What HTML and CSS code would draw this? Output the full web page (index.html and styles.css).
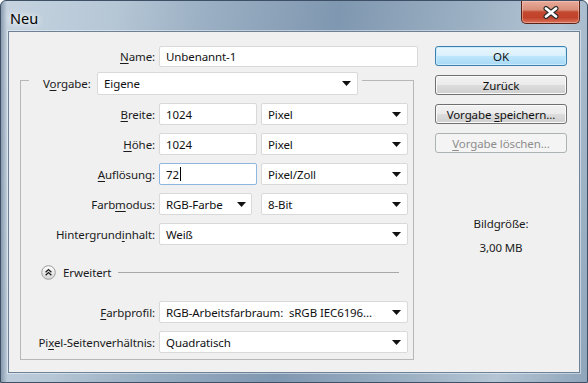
FILE: index.html
```html
<!DOCTYPE html>
<html lang="de">
<head>
    <meta charset="UTF-8">
    <meta name="viewport" content="width=device-width, initial-scale=1.0">
    <title>Neu</title>
    <link rel="stylesheet" href="styles.css">
</head>
<body>

<div class="window">
    <div class="titlebar">
        <span class="title">Neu</span>
        <button class="close-btn" title="Schließen">
            <svg width="18" height="13" viewBox="0 0 18 13">
                <path d="M4 2.5 L14 10.5 M14 2.5 L4 10.5" stroke="#2c2c2c" stroke-width="5" stroke-linecap="round"/>
                <path d="M4 2.5 L14 10.5 M14 2.5 L4 10.5" stroke="#ffffff" stroke-width="2.8" stroke-linecap="round"/>
            </svg>
        </button>
    </div>

    <div class="client">
        <!-- linke Seite: Formular -->
        <div class="main">
            <div class="row name-row">
                <label><u>N</u>ame:</label>
                <div class="field">Unbenannt-1</div>
            </div>

            <div class="group">
                <div class="legend">
                    <label>V<u>o</u>rgabe:</label>
                    <div class="select preset">
                        <span>Eigene</span>
                        <svg class="arrow" width="9" height="5" viewBox="0 0 9 5"><path d="M0 0H9L4.5 5Z"/></svg>
                    </div>
                </div>

                <div class="row">
                    <label><u>B</u>reite:</label>
                    <div class="pair">
                        <div class="field num">1024</div>
                        <div class="select unit">
                            <span>Pixel</span>
                            <svg class="arrow" width="9" height="5" viewBox="0 0 9 5"><path d="M0 0H9L4.5 5Z"/></svg>
                        </div>
                    </div>
                </div>

                <div class="row">
                    <label><u>H</u>öhe:</label>
                    <div class="pair">
                        <div class="field num">1024</div>
                        <div class="select unit">
                            <span>Pixel</span>
                            <svg class="arrow" width="9" height="5" viewBox="0 0 9 5"><path d="M0 0H9L4.5 5Z"/></svg>
                        </div>
                    </div>
                </div>

                <div class="row">
                    <label><u>A</u>uflösung:</label>
                    <div class="pair">
                        <div class="field num focused">72<span class="caret"></span></div>
                        <div class="select unit">
                            <span>Pixel/Zoll</span>
                            <svg class="arrow" width="9" height="5" viewBox="0 0 9 5"><path d="M0 0H9L4.5 5Z"/></svg>
                        </div>
                    </div>
                </div>

                <div class="row">
                    <label>Farb<u>m</u>odus:</label>
                    <div class="pair">
                        <div class="select mode">
                            <span>RGB-Farbe</span>
                            <svg class="arrow" width="9" height="5" viewBox="0 0 9 5"><path d="M0 0H9L4.5 5Z"/></svg>
                        </div>
                        <div class="select unit">
                            <span>8-Bit</span>
                            <svg class="arrow" width="9" height="5" viewBox="0 0 9 5"><path d="M0 0H9L4.5 5Z"/></svg>
                        </div>
                    </div>
                </div>

                <div class="row">
                    <label>Hintergrund<u>i</u>nhalt:</label>
                    <div class="select">
                        <span>Weiß</span>
                        <svg class="arrow" width="9" height="5" viewBox="0 0 9 5"><path d="M0 0H9L4.5 5Z"/></svg>
                    </div>
                </div>

                <div class="advanced">
                    <svg class="toggle" width="15" height="15" viewBox="0 0 15 15">
                        <defs>
                            <linearGradient id="knob" x1="0" y1="0" x2="0" y2="1">
                                <stop offset="0" stop-color="#ffffff"/>
                                <stop offset="1" stop-color="#d6d6d6"/>
                            </linearGradient>
                        </defs>
                        <circle cx="7.5" cy="7.5" r="6.8" fill="url(#knob)" stroke="#9c9c9c"/>
                        <path d="M4.6 7.2 L7.5 4.6 L10.4 7.2 M4.6 10.2 L7.5 7.6 L10.4 10.2" fill="none" stroke="#1c1c1c" stroke-width="1.3"/>
                    </svg>
                    <span>Erweitert</span>
                    <div class="rule"></div>
                </div>

                <div class="row profile">
                    <label><u>F</u>arbprofil:</label>
                    <div class="select">
                        <span>RGB-Arbeitsfarbraum:&nbsp; sRGB IEC6196...</span>
                        <svg class="arrow" width="9" height="5" viewBox="0 0 9 5"><path d="M0 0H9L4.5 5Z"/></svg>
                    </div>
                </div>

                <div class="row">
                    <label>Pi<u>x</u>el-Seitenverhältnis:</label>
                    <div class="select">
                        <span>Quadratisch</span>
                        <svg class="arrow" width="9" height="5" viewBox="0 0 9 5"><path d="M0 0H9L4.5 5Z"/></svg>
                    </div>
                </div>
            </div>
        </div>

        <!-- rechte Seite: Buttons und Bildgröße -->
        <div class="side">
            <button class="btn default">OK</button>
            <button class="btn">Zurück</button>
            <button class="btn">Vorgabe <u>s</u>peichern...</button>
            <button class="btn" disabled><u>V</u>orgabe löschen...</button>

            <div class="size-label">Bildgröße:</div>
            <div class="size-value">3,00 MB</div>
        </div>
    </div>
</div>

</body>
</html>
```

FILE: styles.css
```css
* {
    box-sizing: border-box;
}

html, body {
    margin: 0;
    padding: 0;
}

body {
    width: 588px;
    height: 383px;
    overflow: hidden;
    font-family: "Noto Sans", "Open Sans", sans-serif;
    font-size: 11.5px;
    letter-spacing: -0.1px;
    color: #1b1b1b;
}

u {
    text-decoration: underline;
    text-underline-offset: 2px;
}

/* Fensterrahmen */
.window {
    width: 588px;
    height: 383px;
    display: flex;
    flex-direction: column;
    padding: 0 7px 9px 7px;
    border: 1px solid #3d5065;
    border-radius: 6px 6px 0 0;
    background:
        linear-gradient(to right, rgba(90, 110, 135, 0.55) 0, rgba(90, 110, 135, 0) 6px),
        linear-gradient(100deg, #c6d4e0 0%, #b5c6d5 18%, #9aafc3 32%, #7f97b0 52%, #9bb0c3 72%, #b4c5d4 86%, #8fa5bb 100%);
}

.titlebar {
    height: 30px;
    display: flex;
    align-items: flex-start;
    padding-left: 2px;
}

.title {
    margin-top: 7px;
    font-size: 14.5px;
    letter-spacing: 0;
    color: #000;
    text-shadow: 0 0 6px #ffffff, 0 0 10px rgba(255, 255, 255, 0.8);
}

.close-btn {
    margin-left: auto;
    width: 59px;
    height: 23px;
    padding: 0;
    display: flex;
    align-items: center;
    justify-content: center;
    border: 1px solid #5a2319;
    border-top: none;
    border-radius: 0 0 5px 5px;
    background: linear-gradient(#e8ab9b 0%, #d88f79 40%, #c4482f 50%, #c0422a 75%, #d97258 100%);
    box-shadow: inset 0 0 0 1px rgba(255, 210, 200, 0.45);
}

/* Inhalt */
.client {
    flex: 1;
    display: flex;
    background-color: #f0f0f0;
    border: 1px solid #6d8197;
    box-shadow: 0 0 0 1px rgba(255, 255, 255, 0.45);
}

.main {
    width: 409px;
    padding: 14px 0 0 11px;
}

.row {
    display: grid;
    grid-template-columns: 134px 249px;
    column-gap: 4px;
    align-items: center;
    height: 22px;
    margin-top: 8px;
}

.row label {
    text-align: right;
    white-space: nowrap;
}

.name-row {
    grid-template-columns: 135px 259px;
    height: 21px;
    margin-top: 0;
}

.field, .select {
    height: 100%;
    display: flex;
    align-items: center;
    padding: 0 6px;
    background-color: #fff;
    border: 1px solid #d9d9d9;
    border-radius: 2px;
    color: #111;
    white-space: nowrap;
}

.select {
    justify-content: space-between;
}

.select .arrow {
    flex-shrink: 0;
    fill: #111;
}

.pair {
    height: 100%;
    display: flex;
    justify-content: space-between;
}

.num {
    width: 98px;
}

.unit {
    width: 147px;
}

.mode {
    width: 93px;
    padding-right: 5px;
}

.focused {
    border-color: #8db6e0;
}

.caret {
    display: inline-block;
    width: 1px;
    height: 14px;
    margin-left: 1px;
    background-color: #000;
}

/* Gruppe "Vorgabe" */
.group {
    width: 394px;
    margin-top: 13px;
    padding: 0 5px 6px 0;
    border: 1px solid #b7b7b7;
}

.legend {
    width: fit-content;
    height: 23px;
    display: flex;
    align-items: center;
    gap: 5px;
    margin: -9px 0 2px 8px;
    padding: 0 4px 0 14px;
    background-color: #f0f0f0;
}

.legend label {
    width: 49px;
    white-space: nowrap;
}

.preset {
    width: 261px;
    padding-right: 6px;
}

.advanced {
    height: 22px;
    display: flex;
    align-items: center;
    margin-top: 16px;
    padding-left: 20px;
}

.advanced .toggle {
    flex-shrink: 0;
    margin-right: 7px;
}

.rule {
    flex: 1;
    height: 1px;
    margin: 1px 9px 0 7px;
    background-color: #a8a8a8;
}

.profile {
    margin-top: 18px;
}

/* Buttons rechts */
.side {
    width: 132px;
    margin-left: 17px;
    padding-top: 14px;
    display: flex;
    flex-direction: column;
    align-items: center;
}

.btn {
    width: 132px;
    height: 20px;
    margin-bottom: 9px;
    padding: 0;
    font-family: inherit;
    font-size: 11.5px;
    letter-spacing: -0.1px;
    color: #111;
    border: 1px solid #707070;
    border-radius: 3px;
    background: linear-gradient(#f2f2f2 0%, #ebebeb 50%, #dddddd 50%, #cfcfcf 100%);
    box-shadow: inset 0 0 0 1px #fbfbfb;
}

.btn.default {
    border-color: #3c7fb1;
    background: linear-gradient(#eaf6fd 0%, #d9f0fc 50%, #bee6fd 50%, #a7d9f5 100%);
    box-shadow: inset 0 0 0 1px #c8ecfb;
}

.btn:disabled {
    color: #8d8d8d;
    border-color: #adb2b5;
    background: #f4f4f4;
    box-shadow: none;
}

.size-label {
    margin-top: 54px;
    line-height: 16px;
}

.size-value {
    margin-top: 8px;
    line-height: 16px;
}
```
